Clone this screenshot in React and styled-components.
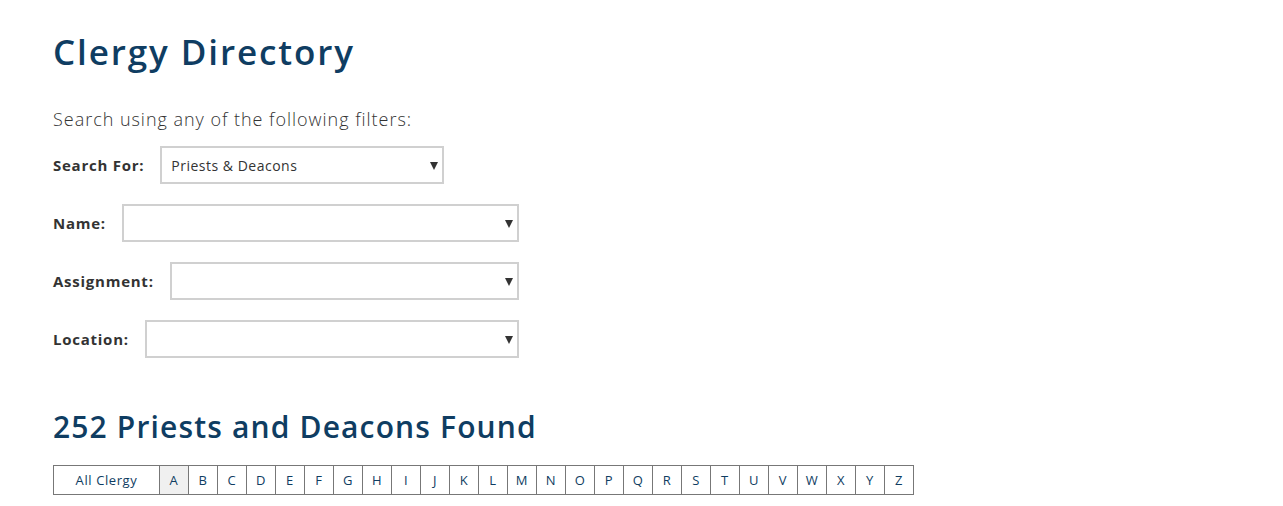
import React from "react";
import styled, { createGlobalStyle } from "styled-components";

const GlobalStyle = createGlobalStyle`
  body {
    margin: 0;
    background: #fff;
    font-family: "Open Sans", "Liberation Sans", sans-serif;
    color: #333;
  }
`;

const Page = styled.div`
  padding: 28px 53px 0;
`;

const Title = styled.h1`
  margin: 0;
  font-size: 35px;
  line-height: 48px;
  font-weight: 600;
  color: #0f3d62;
  letter-spacing: 1.9px;
`;

const Intro = styled.p`
  margin: 32px 0 16px;
  font-size: 18px;
  line-height: 22px;
  font-weight: 300;
  color: #333;
  letter-spacing: 0.97px;
`;

const Filters = styled.form`
  display: flex;
  flex-direction: column;
  gap: 20px;
  width: 466px;
`;

const Row = styled.div`
  display: flex;
  align-items: center;
`;

const Label = styled.label`
  font-size: 15px;
  font-weight: 700;
  color: #333;
  margin-right: 16px;
  white-space: nowrap;
  letter-spacing: 0.75px;
`;

const SelectWrap = styled.div`
  position: relative;
  flex: ${(p) => (p.$width ? "none" : "1")};
  width: ${(p) => (p.$width ? `${p.$width}px` : "auto")};

  &::after {
    content: "";
    position: absolute;
    right: 6px;
    top: 16px;
    border-left: 4px solid transparent;
    border-right: 4px solid transparent;
    border-top: 8px solid #333;
    pointer-events: none;
  }
`;

const Select = styled.select`
  appearance: none;
  width: 100%;
  height: 38px;
  box-sizing: border-box;
  border: 2px solid #d0d0d0;
  background: #fff;
  padding: 0 24px 0 9px;
  font-family: "Open Sans", "Liberation Sans", sans-serif;
  font-size: 14px;
  letter-spacing: 0.5px;
  color: #333;
  outline: none;
`;

const Found = styled.h2`
  margin: 49px 0 18px;
  font-size: 30px;
  line-height: 40px;
  font-weight: 600;
  color: #0f3d62;
  letter-spacing: 1.15px;
`;

const Letters = styled.div`
  display: flex;
  border: 1px solid #777;
  width: max-content;
`;

const Cell = styled.a`
  box-sizing: border-box;
  width: ${(p) => (p.$wide ? "105px" : "29px")};
  height: 28px;
  display: flex;
  align-items: center;
  justify-content: center;
  font-size: 13px;
  letter-spacing: 0.6px;
  color: #0f3d62;
  text-decoration: none;
  background: ${(p) => (p.$active ? "#f0f0f0" : "#fff")};
  border-left: ${(p) => (p.$wide ? "none" : "1px solid #777")};
  cursor: pointer;
`;

const filters = [
  { label: "Search For:", value: "Priests & Deacons", width: 284 },
  { label: "Name:" },
  { label: "Assignment:" },
  { label: "Location:" },
];

const alphabet = "ABCDEFGHIJKLMNOPQRSTUVWXYZ".split("");

export default function App() {
  return (
    <Page>
      <GlobalStyle />
      <Title>Clergy Directory</Title>
      <Intro>Search using any of the following filters:</Intro>
      <Filters>
        {filters.map((f) => (
          <Row key={f.label}>
            <Label>{f.label}</Label>
            <SelectWrap $width={f.width}>
              <Select defaultValue={f.value || ""}>
                <option value={f.value || ""}>{f.value || ""}</option>
              </Select>
            </SelectWrap>
          </Row>
        ))}
      </Filters>
      <Found>252 Priests and Deacons Found</Found>
      <Letters>
        <Cell $wide>All Clergy</Cell>
        {alphabet.map((l) => (
          <Cell key={l} $active={l === "A"}>
            {l}
          </Cell>
        ))}
      </Letters>
    </Page>
  );
}
